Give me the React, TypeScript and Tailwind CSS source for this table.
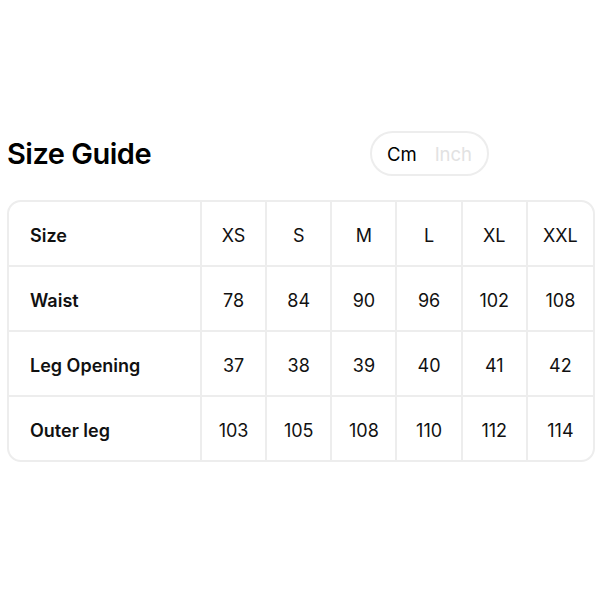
const sizes = ['XS', 'S', 'M', 'L', 'XL', 'XXL']

const rows = [
  { label: 'Waist', values: ['78', '84', '90', '96', '102', '108'] },
  { label: 'Leg Opening', values: ['37', '38', '39', '40', '41', '42'] },
  { label: 'Outer leg', values: ['103', '105', '108', '110', '112', '114'] },
]

function Row({ label, values, last }: { label: string; values: string[]; last?: boolean }) {
  const rowCls = last ? 'h-[63px] pt-[4px]' : 'h-[65px] pt-[3px] border-b-2 border-[#ededed]'
  return (
    <>
      <div className={`${rowCls} flex items-center pl-[21px] font-semibold border-r-2 border-[#ededed]`}>
        {label}
      </div>
      {values.map((v, i) => (
        <div
          key={i}
          className={`${rowCls} flex items-center justify-center ${i < values.length - 1 ? 'border-r-2 border-[#ededed]' : ''}`}
        >
          {v}
        </div>
      ))}
    </>
  )
}

export default function App() {
  return (
    <div className="w-[600px] h-[600px] bg-white pt-[131px] font-['Inter',sans-serif] text-[#111]">
      {/* Header */}
      <div className="flex items-center justify-between pl-[7px] pr-[111px]">
        <h1 className="text-[29px] font-semibold tracking-[-0.5px] text-black pt-[1px]">Size Guide</h1>
        <div className="h-[45px] w-[119px] pt-[2px] rounded-full border-2 border-[#ededed] flex items-center justify-center gap-[18px] text-[18.5px]">
          <span className="text-black">Cm</span>
          <span className="text-[#e2e2e2]">Inch</span>
        </div>
      </div>

      {/* Table */}
      <div className="mx-[7px] mt-[24px] w-[588px] border-2 border-[#ededed] rounded-[14px] overflow-hidden grid grid-cols-[193px_repeat(6,1fr)] text-[18px]">
        <Row label="Size" values={sizes} />
        {rows.map((r, i) => (
          <Row key={r.label} label={r.label} values={r.values} last={i === rows.length - 1} />
        ))}
      </div>
    </div>
  )
}
